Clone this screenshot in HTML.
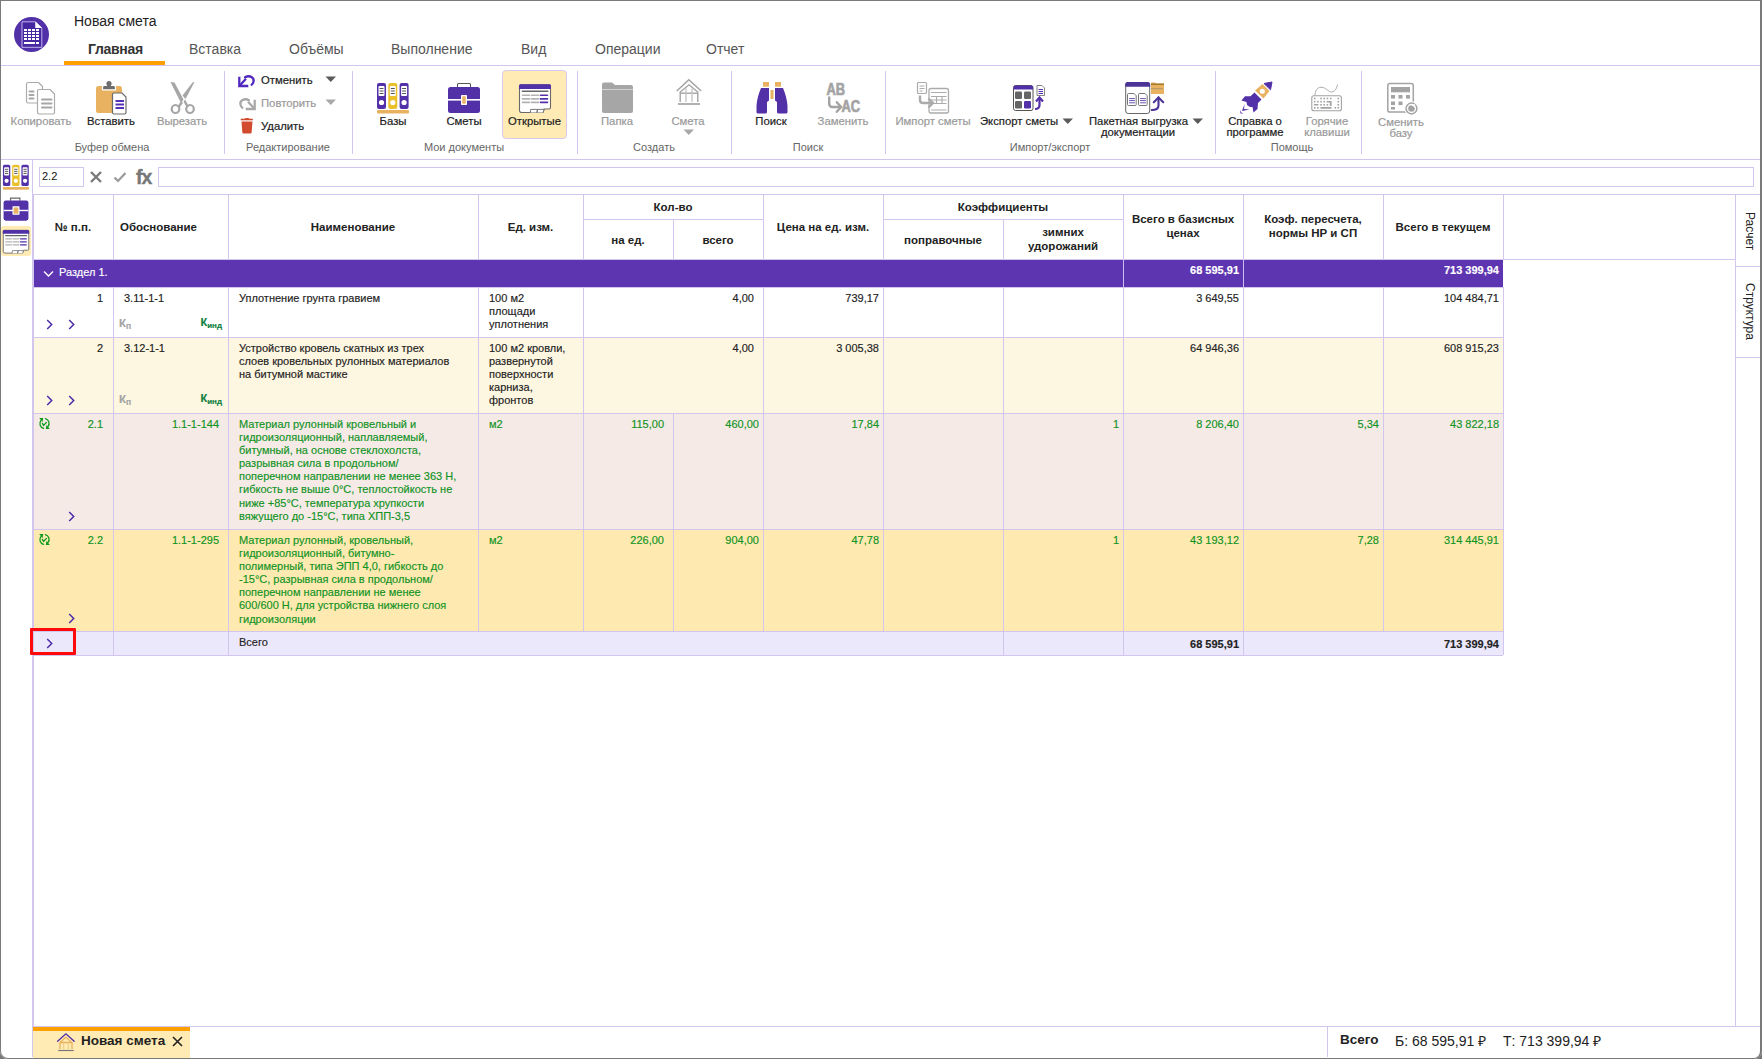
<!DOCTYPE html>
<html><head><meta charset="utf-8">
<style>
*{box-sizing:border-box;margin:0;padding:0}
html,body{width:1762px;height:1059px;overflow:hidden;background:#fff}
body{position:relative;font-family:"Liberation Sans",sans-serif;color:#222}
.a{position:absolute}
.ln{position:absolute;background:#d3c6ee}
.t{position:absolute;white-space:nowrap}
/* window frame */
#frame{position:absolute;left:0;top:0;width:1762px;height:1059px;border-top:1px solid #7a7a7a;border-left:1px solid #7a7a7a;border-right:2px solid #7a7a7a;border-bottom:1px solid #7a7a7a;border-radius:0 0 8px 8px;box-shadow:0 0 0 12px #777;pointer-events:none;z-index:50}
/* title */
.tab{position:absolute;top:41px;font-size:14px;color:#555;white-space:nowrap}
/* ribbon */
.rl{position:absolute;font-size:11.3px;white-space:nowrap;text-align:center;line-height:11px;-webkit-text-stroke:0.2px currentColor}
.dis{color:#9a9a9a}
.en{color:#222}
.grp{position:absolute;top:141px;font-size:11px;color:#666;white-space:nowrap;text-align:center}
.sep{position:absolute;top:71px;height:83px;width:1px;background:#d3c6ee}
/* table */
.c{position:absolute;font-size:11px;line-height:13.1px;white-space:nowrap;-webkit-text-stroke:0.15px currentColor}
.h{position:absolute;font-size:11.5px;font-weight:bold;color:#222;text-align:center;line-height:13px;white-space:nowrap}
.g{color:#1e9a2e}
.r{text-align:right}
</style></head><body>
<div id="frame"></div>

<!-- ===== TITLE AREA ===== -->
<svg class="a" style="left:14px;top:17px" width="36" height="36" viewBox="0 0 36 36">
  <circle cx="17.5" cy="17.5" r="17.5" fill="#5231a8"/>
  <path d="M8 4.8h13.5l6.3 6.3v19.2h-19.8z" fill="#4527a0" stroke="#c2b3ee" stroke-width="1"/>
  <path d="M21.5 4.8v6.3h6.3" fill="#fff" stroke="none"/>
  <path d="M21.5 4.8l6.3 6.3h-6.3z" fill="#fff"/>
  <g fill="#fff"><rect x="10" y="12" width="3" height="2"/><rect x="14" y="12" width="3" height="2"/><rect x="18" y="12" width="3" height="2"/><rect x="22" y="12" width="3" height="2"/><rect x="10" y="15" width="3" height="2"/><rect x="14" y="15" width="3" height="2"/><rect x="18" y="15" width="3" height="2"/><rect x="22" y="15" width="3" height="2"/><rect x="10" y="18" width="3" height="2"/><rect x="14" y="18" width="3" height="2"/><rect x="18" y="18" width="3" height="2"/><rect x="22" y="18" width="3" height="2"/><rect x="10" y="21" width="3" height="2"/><rect x="14" y="21" width="3" height="2"/><rect x="18" y="21" width="3" height="2"/><rect x="22" y="21" width="3" height="2"/><rect x="10" y="25" width="11" height="2"/><rect x="22" y="25" width="3" height="2"/></g>
</svg>
<div class="t" style="left:74px;top:13px;font-size:14px;color:#222">Новая смета</div>
<div class="tab" style="left:88px;font-weight:bold;color:#333;letter-spacing:-0.3px">Главная</div>
<div class="tab" style="left:189px">Вставка</div>
<div class="tab" style="left:289px">Объёмы</div>
<div class="tab" style="left:391px">Выполнение</div>
<div class="tab" style="left:521px">Вид</div>
<div class="tab" style="left:595px">Операции</div>
<div class="tab" style="left:706px">Отчет</div>
<div class="a" style="left:64px;top:61px;width:101px;height:4px;background:#ff9f00"></div>
<div class="ln" style="left:1px;top:65px;width:1759px;height:1px"></div>

<!-- RIBBON placeholder -->
<!-- ===== RIBBON ===== -->
<!-- Copy -->
<svg class="a" style="left:24px;top:80px" width="36" height="36" viewBox="0 0 36 36">
  <g fill="#fff" stroke="#ababab" stroke-width="1.2" stroke-linejoin="round">
    <path d="M4 2.5h10.5l4 4v16.5h-14.5a1.5 1.5 0 0 1-1.5-1.5v-17.5a1.5 1.5 0 0 1 1.5-1.5z"/>
    <path d="M15 9.5h11l4.5 4.5v18.5a1.5 1.5 0 0 1-1.5 1.5h-14a1.5 1.5 0 0 1-1.5-1.5v-21.5a1.5 1.5 0 0 1 1.5-1.5z"/>
  </g>
  <g stroke="#a6a6a6" stroke-width="2" stroke-linecap="round">
    <path d="M5.5 11.5h4M5.5 15h4M5.5 18.5h4"/>
    <path d="M18 19.5h9.5M18 23.5h9.5M18 27.5h9.5"/>
  </g>
</svg>
<div class="rl dis" style="left:10px;top:116px;width:62px">Копировать</div>
<!-- Paste -->
<svg class="a" style="left:94px;top:80px" width="36" height="36" viewBox="0 0 36 36">
  <rect x="2" y="6" width="26" height="27" rx="2.5" fill="#e8b261"/>
  <path d="M8.5 9.8v-2.3a2 2 0 0 1 2-2h2a2.6 2.6 0 0 1 5 0h2a2 2 0 0 1 2 2v2.3z" fill="#6d6d6d" stroke="#fff" stroke-width="1.2"/><circle cx="15" cy="3.6" r="2.6" fill="#6d6d6d"/>
  <path d="M20 13h8l4 4v15.5a1.5 1.5 0 0 1-1.5 1.5h-10.5a1.5 1.5 0 0 1-1.5-1.5v-18a1.5 1.5 0 0 1 1.5-1.5z" fill="#fff" stroke="#6a6a6a" stroke-width="1.2"/>
  <g stroke="#5530b5" stroke-width="2"><path d="M21.5 21h8.5M21.5 24.5h8.5M21.5 28h8.5"/></g>
</svg>
<div class="rl en" style="left:86px;top:116px;width:50px">Вставить</div>
<!-- Cut -->
<svg class="a" style="left:166px;top:80px" width="36" height="36" viewBox="0 0 36 36">
  <g fill="#a6a6a6">
    <path d="M4.5 2l4 0.5 9 17 -2.5 3.5z"/>
    <path d="M28.5 2L19.5 19l-3-3.5 10-13z"/>
    <path d="M15 21l-3.5 5.5 2 1.2 3.5-5z"/>
    <path d="M19 19.5l4 7 -2 1.2 -3.5-6z"/>
  </g>
  <g fill="none" stroke="#a6a6a6" stroke-width="2.2">
    <ellipse cx="9.5" cy="29" rx="3.8" ry="4"/>
    <ellipse cx="24" cy="29" rx="3.8" ry="4"/>
  </g>
</svg>
<div class="rl dis" style="left:156px;top:116px;width:52px">Вырезать</div>
<div class="grp" style="left:60px;top:141px;width:104px">Буфер обмена</div>
<div class="sep" style="left:224px"></div>

<!-- Undo / Redo / Delete -->
<svg class="a" style="left:238px;top:73px" width="18" height="15" viewBox="0 0 18 15">
  <path d="M7 4.2c5-2.5 9.5 0.5 8.5 4.5c-0.3 1.2-1 2.4-1.8 3" fill="none" stroke="#5128c0" stroke-width="2.3" stroke-linecap="round"/>
  <path d="M1.3 3.8v9.2h9" fill="none" stroke="#5128c0" stroke-width="2.3" stroke-linejoin="miter"/>
  <path d="M2 12.2L8 5.8" stroke="#5128c0" stroke-width="2.3"/>
</svg>
<div class="rl en" style="left:261px;top:75px">Отменить</div>
<svg class="a" style="left:325px;top:76px" width="12" height="7"><path d="M0.5 0.5h10.5L5.75 6z" fill="#5a5a5a"/></svg>
<svg class="a" style="left:238px;top:96px" width="18" height="15" viewBox="0 0 18 15">
  <path d="M11 4.2c-5-2.5 -9.5 0.5 -8.5 4.5c0.3 1.2 1 2.4 1.8 3" fill="none" stroke="#a8a8a8" stroke-width="2.3" stroke-linecap="round"/>
  <path d="M16.7 3.8v9.2h-9" fill="none" stroke="#a8a8a8" stroke-width="2.3"/>
  <path d="M16 12.2L10 5.8" stroke="#a8a8a8" stroke-width="2.3"/>
</svg>
<div class="rl dis" style="left:261px;top:98px">Повторить</div>
<svg class="a" style="left:325px;top:99px" width="12" height="7"><path d="M0.5 0.5h10.5L5.75 6z" fill="#a8a8a8"/></svg>
<svg class="a" style="left:240px;top:117px" width="14" height="17" viewBox="0 0 14 17">
  <path d="M0.8 2.5h12" stroke="#d24b2e" stroke-width="1.6"/>
  <path d="M4.5 2c0-1.5 5-1.5 5 0" fill="#d24b2e"/>
  <path d="M1.5 4.5h11l-0.8 10.5c-0.1 1-0.8 1.5-1.7 1.5h-6c-0.9 0-1.6-0.5-1.7-1.5z" fill="#d24b2e"/>
</svg>
<div class="rl en" style="left:261px;top:121px">Удалить</div>
<div class="grp" style="left:230px;top:141px;width:116px">Редактирование</div>
<div class="sep" style="left:352px"></div>

<!-- Bases -->
<svg class="a" style="left:376px;top:82px" width="34" height="33" viewBox="0 0 34 33">
  <g>
    <rect x="1" y="1" width="9" height="26" rx="2" fill="#5230a8"/>
    <rect x="12.3" y="1" width="9" height="26" rx="2" fill="#ebc12b"/>
    <rect x="23.6" y="1" width="9" height="26" rx="2" fill="#5230a8"/>
  </g>
  <g fill="#fff"><rect x="2.5" y="4" width="6" height="10" rx="1"/><rect x="13.8" y="4" width="6" height="10" rx="1"/><rect x="25.1" y="4" width="6" height="10" rx="1"/>
  <circle cx="5.5" cy="20.5" r="2.6"/><circle cx="16.8" cy="20.5" r="2.6"/><circle cx="28.1" cy="20.5" r="2.6"/></g>
  <g stroke="#555" stroke-width="1"><path d="M3.5 6.5h4M3.5 9h4M3.5 11.5h4M14.8 6.5h4M14.8 9h4M14.8 11.5h4M26.1 6.5h4M26.1 9h4M26.1 11.5h4"/></g>
  <rect x="1" y="28" width="32" height="3.5" rx="1" fill="#e8b261"/>
</svg>
<div class="rl en" style="left:378px;top:116px;width:30px">Базы</div>
<!-- Smety briefcase -->
<svg class="a" style="left:446px;top:80px" width="36" height="36" viewBox="0 0 36 36">
  <path d="M11.5 7.5v-3a1 1 0 0 1 1-1h11a1 1 0 0 1 1 1v3" fill="none" stroke="#555" stroke-width="1.1"/>
  <rect x="2" y="7" width="32" height="26" rx="2.5" fill="#5230a8"/>
  <rect x="2" y="19" width="32" height="1.6" fill="#fff"/>
  <rect x="15" y="15" width="6" height="10" rx="0.8" fill="#fff"/>
  <rect x="16.3" y="16.3" width="3.4" height="7.4" fill="#e8b261"/>
</svg>
<div class="rl en" style="left:446px;top:116px;width:36px">Сметы</div>
<!-- Open (selected) -->
<div class="a" style="left:502px;top:70px;width:65px;height:69px;background:#ffebb3;border:1px solid #d8c8ee;border-radius:4px"></div>
<svg class="a" style="left:518px;top:82px" width="34" height="34" viewBox="0 0 34 34">
  <path d="M2.6 2.8h28.8a1.1 1.1 0 0 1 1.1 1.1v21.6a1.5 1.5 0 0 1-1.5 1.5h-4.8l-1.2 3.5h-21.3a2 2 0 0 1-2.2-2v-24.6a1.1 1.1 0 0 1 1.1-1.1z" fill="#fff" stroke="#6a6a6a" stroke-width="1.1"/>
  <path d="M2.6 2.3h28.8a1.6 1.6 0 0 1 1.6 1.6v3.2h-32v-3.2a1.6 1.6 0 0 1 1.6-1.6z" fill="#5230a8"/>
  <path d="M12.3 30.6l0.4-3.2h6.8l-0.6 3.2M18.9 30.6l0.8-3.2h6.4l-1 3.2" fill="#fff" stroke="#6a6a6a" stroke-width="0.9"/>
  <path d="M4.3 9.2h25.5" stroke="#666" stroke-width="1.5" stroke-linecap="round"/>
  <g stroke="#b3b3b3" stroke-width="1.6" stroke-linecap="round"><path d="M4.5 13.2h7M13.5 13.2h7M4.5 16.9h7M13.5 16.9h7M4.5 20.4h7M13.5 20.4h7"/></g>
  <g stroke="#5230a8" stroke-width="1.6" stroke-linecap="round"><path d="M22.5 13.2h7M22.5 16.9h7M22.5 20.4h7"/></g>
</svg>
<div class="rl en" style="left:503px;top:116px;width:63px">Открытые</div>
<div class="grp" style="left:380px;top:141px;width:168px">Мои документы</div>
<div class="sep" style="left:577px"></div>

<!-- Folder -->
<svg class="a" style="left:600px;top:80px" width="36" height="36" viewBox="0 0 36 36">
  <path d="M2 4.5a2 2 0 0 1 2-2h8l3 2.5h16a2 2 0 0 1 2 2v2.5h-31z" fill="#a6a6a6"/>
  <path d="M2 10h31v21a2 2 0 0 1-2 2h-27a2 2 0 0 1-2-2z" fill="#a6a6a6"/>
</svg>
<div class="rl dis" style="left:597px;top:116px;width:40px">Папка</div>
<!-- House -->
<svg class="a" style="left:670px;top:74px" width="40" height="40" viewBox="0 0 40 40">
  <path d="M6.8 17L18.8 5.8 31.2 17" fill="none" stroke="#a3a3a3" stroke-width="1.5"/>
  <path d="M10.2 28v-10L19 10.8 27.8 18v10" fill="none" stroke="#a3a3a3" stroke-width="1.4"/>
  <path d="M10.2 19.2h17.6" stroke="#a3a3a3" stroke-width="1.4"/>
  <path d="M16 14.5v13.5M22 14.5v13.5" stroke="#c4c4c4" stroke-width="1.3"/>
  <path d="M8 30h22" stroke="#a3a3a3" stroke-width="1.7"/>
</svg>
<div class="rl dis" style="left:668px;top:116px;width:40px">Смета</div>
<svg class="a" style="left:683px;top:129px" width="12" height="7"><path d="M0.5 0.5h10.5L5.75 6z" fill="#a8a8a8"/></svg>
<div class="grp" style="left:610px;top:141px;width:88px">Создать</div>
<div class="sep" style="left:731px"></div>

<!-- Binoculars -->
<svg class="a" style="left:752px;top:78px" width="40" height="40" viewBox="0 0 40 40">
  <rect x="11" y="4" width="6" height="4.7" fill="#e8b261"/><rect x="23" y="4" width="6" height="4.7" fill="#e8b261"/>
  <rect x="18.5" y="12" width="3" height="9" fill="#e8b261"/>
  <path d="M10 10h7v12.5l-2 1.5v10a1.5 1.5 0 0 1-1.5 1.5h-7.5a1.5 1.5 0 0 1-1.5-1.5v-6c0.3-6 2-12 4.5-18z" fill="#5230a8"/>
  <path d="M30 10h-7v12.5l2 1.5v10a1.5 1.5 0 0 0 1.5 1.5h7.5a1.5 1.5 0 0 0 1.5-1.5v-6c-0.3-6-2-12-4.5-18z" fill="#5230a8"/>
</svg>
<div class="rl en" style="left:751px;top:116px;width:40px">Поиск</div>
<!-- Replace -->
<svg class="a" style="left:826px;top:80px" width="36" height="36" viewBox="0 0 36 36">
  <text transform="translate(0.5,14.8) scale(0.78,1)" font-family="Liberation Sans" font-weight="bold" font-size="16.5" fill="#a3a3a3" stroke="#a3a3a3" stroke-width="0.7">AB</text>
  <text transform="translate(15.5,32) scale(0.78,1)" font-family="Liberation Sans" font-weight="bold" font-size="16.5" fill="#a3a3a3" stroke="#a3a3a3" stroke-width="0.7">AC</text>
  <path d="M3.2 17.5v6.5a3 3 0 0 0 3 3h8" fill="none" stroke="#a3a3a3" stroke-width="2.4" stroke-linecap="round"/>
  <path d="M10.8 22.2l4.3 4.8-4.3 4.8" fill="none" stroke="#a3a3a3" stroke-width="2.4" stroke-linecap="round"/>
</svg>
<div class="rl dis" style="left:812px;top:116px;width:62px">Заменить</div>
<div class="grp" style="left:768px;top:141px;width:80px">Поиск</div>
<div class="sep" style="left:885px"></div>
<!-- Import -->
<svg class="a" style="left:915px;top:80px" width="36" height="36" viewBox="0 0 36 36">
  <rect x="2.5" y="2.5" width="9" height="11" rx="1" fill="#fff" stroke="#ababab" stroke-width="1.2"/>
  <g stroke="#ababab" stroke-width="1"><path d="M4.5 6h5M4.5 8.5h5M4.5 11h3"/></g>
  <rect x="14" y="8.5" width="19.5" height="24.5" rx="2" fill="#fff" stroke="#ababab" stroke-width="1.3"/>
  <g stroke="#ababab" stroke-width="1.1"><path d="M16 12.5h15.5M16 30h15.5M16 16.5h15.5M16 20h15.5M16 23.5h15.5M21.5 16.5v7M27 16.5v7"/></g>
  <path d="M5 15.5v4.5c0 2 1 3 3 3h9" fill="none" stroke="#ababab" stroke-width="2.4"/>
  <path d="M13.5 18.5l4.5 4.5-4.5 4.5" fill="none" stroke="#ababab" stroke-width="2.4"/>
</svg>
<div class="rl dis" style="left:893px;top:116px;width:80px">Импорт сметы</div>
<!-- Export -->
<svg class="a" style="left:1011px;top:80px" width="36" height="36" viewBox="0 0 36 36">
  <rect x="2.5" y="5.5" width="19.5" height="25" rx="2" fill="#fff" stroke="#555" stroke-width="1"/>
  <path d="M2.5 7.5a2 2 0 0 1 2-2h15.5a2 2 0 0 1 2 2v2h-19.5z" fill="#5230a8"/>
  <rect x="4" y="11.5" width="7" height="7.5" rx="1.2" fill="#666"/><rect x="13" y="11.5" width="7" height="7.5" rx="1.2" fill="#666"/>
  <rect x="4" y="21" width="7" height="7.5" rx="1.2" fill="#666"/><rect x="13" y="21" width="7" height="7.5" rx="1.2" fill="#5230a8"/>
  <path d="M26 5.5h5l2.5 2.5v7.5h-7.5z" fill="#fff" stroke="#777" stroke-width="0.9"/>
  <g stroke="#5230a8" stroke-width="1"><path d="M27.5 9.5h4.5M27.5 11.5h4.5M27.5 13.5h4.5"/></g>
  <path d="M24 29c3 0 4.5-1.5 4.5-4v-6" fill="none" stroke="#5230a8" stroke-width="2.2"/>
  <path d="M25 21.5l3.5-4 3.5 4" fill="none" stroke="#5230a8" stroke-width="2.2"/>
</svg>
<div class="rl en" style="left:980px;top:116px;width:82px;text-align:left">Экспорт сметы</div>
<svg class="a" style="left:1062px;top:118px" width="12" height="7"><path d="M0.5 0.5h10.5L5.75 6z" fill="#5a5a5a"/></svg>
<!-- Batch -->
<svg class="a" style="left:1120px;top:76px" width="48" height="42" viewBox="0 0 48 42">
  <rect x="5.7" y="6.5" width="24" height="31" rx="2.5" fill="#fff" stroke="#666" stroke-width="1"/>
  <path d="M5.2 8.5a2.5 2.5 0 0 1 2.5-2.5h20a2.5 2.5 0 0 1 2.5 2.5v2.3h-25z" fill="#4b3495"/>
  <path d="M8.5 17.5h5.5l2.2 2.2v8.8a1 1 0 0 1-1 1h-6.7a1 1 0 0 1-1-1v-10a1 1 0 0 1 1-1z" fill="#fff" stroke="#666" stroke-width="0.9"/>
  <path d="M19.5 17.5h5.5l2.2 2.2v8.8a1 1 0 0 1-1 1h-6.7a1 1 0 0 1-1-1v-10a1 1 0 0 1 1-1z" fill="#fff" stroke="#666" stroke-width="0.9"/>
  <g stroke="#5a3fa8" stroke-width="0.9" stroke-linecap="round"><path d="M9.5 22.6h5M9.5 24.6h5M9.5 26.8h5M20.5 22.6h5M20.5 24.6h5M20.5 26.8h5"/></g>
  <path d="M31 6.5h4l1.2 1h7.8v10.5h-13z" fill="#e8b261"/>
  <path d="M31 7.5h13v1.5h-13z" fill="#a27a30"/>
  <path d="M31.5 12.7h12" stroke="#7a7a7a" stroke-width="1" stroke-dasharray="1 1"/>
  <path d="M31.8 34c3 0 6.7-0.3 6.7-4.5v-8" fill="none" stroke="#4b3495" stroke-width="2.1" stroke-linecap="round"/>
  <path d="M33.8 26.2l4.7-4.7 4.7 4.7" fill="none" stroke="#4b3495" stroke-width="2.1" stroke-linecap="round"/>
</svg>
<div class="rl en" style="left:1089px;top:116px;width:104px;text-align:left">Пакетная выгрузка</div>
<div class="rl en" style="left:1101px;top:127px;width:80px;text-align:left">документации</div>
<svg class="a" style="left:1192px;top:118px" width="12" height="7"><path d="M0.5 0.5h10.5L5.75 6z" fill="#5a5a5a"/></svg>
<div class="grp" style="left:990px;top:141px;width:120px">Импорт/экспорт</div>
<div class="sep" style="left:1215px"></div>

<!-- Rocket -->
<svg class="a" style="left:1236px;top:78px" width="40" height="40" viewBox="0 0 40 40">
  <path d="M28 5.5L36 4 34.5 11.8z" fill="#5230a8" stroke="#5230a8" stroke-width="1" stroke-linejoin="round"/>
  <path d="M19 12.5L26.5 6 33.5 13 27.5 20.5z" fill="#e8b261"/>
  <circle cx="26.3" cy="13.3" r="2.5" fill="#fff"/>
  <path d="M18.5 14.5L25.5 21.5 22 25 21.5 31 17.5 34.5 16.5 29 14 29 11 27 10.5 24 5.5 22.5 9 18.3 14.5 18.3z" fill="#5230a8"/>
  <path d="M8.5 26L6 33 13.5 31.5 8 31z" fill="#5230a8"/>
  <path d="M4 32L4.5 35.5 7.5 35.5 5.3 34.5z" fill="#5230a8"/>
</svg>
<div class="rl en" style="left:1221px;top:116px;width:68px">Справка о</div>
<div class="rl en" style="left:1221px;top:127px;width:68px">программе</div>
<!-- Keyboard -->
<svg class="a" style="left:1305px;top:78px" width="45" height="40" viewBox="0 0 45 40">
  <path d="M10 17.5C10 13 12 9.5 16 9.2C19.5 9 22 12 24.5 13.5C27.5 15 31.5 13 32.5 6.5" fill="none" stroke="#a3a3a3" stroke-width="0.9"/>
  <rect x="6.8" y="17.8" width="29.6" height="15" rx="2" fill="#fff" stroke="#a3a3a3" stroke-width="1.1"/>
  <g fill="#a3a3a3"><rect x="8.9" y="19.7" width="1.6" height="1.6"/><rect x="15.2" y="19.7" width="1.6" height="1.6"/><rect x="18.4" y="19.7" width="1.6" height="1.6"/><rect x="21.6" y="19.7" width="1.6" height="1.6"/><rect x="24.9" y="19.7" width="1.6" height="1.6"/><rect x="32.5" y="19.7" width="1.6" height="1.6"/><rect x="8.9" y="22.9" width="1.6" height="1.6"/><rect x="12.1" y="22.9" width="1.6" height="1.6"/><rect x="15.2" y="22.9" width="1.6" height="1.6"/><rect x="18.4" y="22.9" width="1.6" height="1.6"/><rect x="32.5" y="22.9" width="1.6" height="1.6"/><rect x="15.2" y="26.0" width="1.6" height="1.6"/><rect x="18.4" y="26.0" width="1.6" height="1.6"/><rect x="21.6" y="26.0" width="1.6" height="1.6"/><rect x="32.5" y="26.0" width="1.6" height="1.6"/><rect x="8.9" y="29.0" width="1.6" height="1.6"/><rect x="12.1" y="29.0" width="1.6" height="1.6"/><rect x="29.5" y="29.0" width="1.6" height="1.6"/><rect x="32.5" y="29.0" width="1.6" height="1.6"/>
  <path d="M21.6 22.9h5v5h-1.8v-3.3h-3.2z"/>
  <rect x="8.8" y="26" width="4.8" height="1.6" rx="0.8"/>
  <rect x="15.3" y="29" width="11.4" height="1.8" rx="0.9"/></g>
</svg>
<div class="rl dis" style="left:1298px;top:116px;width:58px">Горячие</div>
<div class="rl dis" style="left:1298px;top:127px;width:58px">клавиши</div>
<div class="grp" style="left:1250px;top:141px;width:84px">Помощь</div>
<div class="sep" style="left:1361px"></div>
<!-- Calculator -->
<svg class="a" style="left:1384px;top:80px" width="38" height="38" viewBox="0 0 38 38">
  <rect x="3.8" y="3.6" width="25.5" height="28.5" rx="2.2" fill="#fff" stroke="#a3a3a3" stroke-width="1.5"/>
  <rect x="7" y="7" width="19" height="5.3" fill="#a3a3a3"/>
  <g fill="#a3a3a3"><rect x="7" y="15" width="4" height="3.6"/><rect x="14.5" y="15" width="4" height="3.6"/><rect x="22" y="15" width="4" height="3.6"/>
  <rect x="7" y="21.5" width="4" height="3.6"/><rect x="14.5" y="21.5" width="4" height="3.6"/><rect x="7" y="27" width="4" height="2.5"/></g>
  <circle cx="27.5" cy="28.5" r="7.2" fill="#fff"/>
  <circle cx="27.5" cy="28.5" r="5.4" fill="none" stroke="#a3a3a3" stroke-width="1.5"/>
  <circle cx="27.5" cy="28.5" r="3.3" fill="#a3a3a3"/>
  <path d="M27.5 25.2l3.6-1.2v3.8z" fill="#fff"/>
</svg>
<div class="rl dis" style="left:1372px;top:117px;width:58px">Сменить</div>
<div class="rl dis" style="left:1372px;top:128px;width:58px">базу</div>


<div class="ln" style="left:1px;top:159px;width:1759px;height:1px"></div>

<!-- SIDEBAR -->
<div class="ln" style="left:32px;top:160px;width:1px;height:897px"></div>

<!-- TABLE placeholder -->
<!-- SIDEBAR ICONS -->
<svg class="a" style="left:2px;top:164px" width="28" height="27" viewBox="0 0 34 33">
  <rect x="1" y="1" width="9" height="26" rx="2" fill="#5230a8"/>
  <rect x="12.3" y="1" width="9" height="26" rx="2" fill="#ebc12b"/>
  <rect x="23.6" y="1" width="9" height="26" rx="2" fill="#5230a8"/>
  <g fill="#fff"><rect x="2.5" y="4" width="6" height="10" rx="1"/><rect x="13.8" y="4" width="6" height="10" rx="1"/><rect x="25.1" y="4" width="6" height="10" rx="1"/>
  <circle cx="5.5" cy="20.5" r="2.6"/><circle cx="16.8" cy="20.5" r="2.6"/><circle cx="28.1" cy="20.5" r="2.6"/></g>
  <g stroke="#555" stroke-width="1.2"><path d="M3.5 6.5h4M3.5 9h4M3.5 11.5h4M14.8 6.5h4M14.8 9h4M14.8 11.5h4M26.1 6.5h4M26.1 9h4M26.1 11.5h4"/></g>
  <rect x="1" y="28" width="32" height="3.5" rx="1" fill="#e8b261"/>
</svg>
<svg class="a" style="left:2px;top:195px" width="28" height="28" viewBox="0 0 36 36">
  <path d="M11 7.5v-3.5h12v3.5" fill="none" stroke="#666" stroke-width="1.5"/>
  <rect x="2" y="7" width="32" height="26" rx="3" fill="#5230a8"/>
  <rect x="2" y="19" width="32" height="1.8" fill="#fff"/>
  <rect x="13.5" y="14.5" width="9" height="11" rx="0.8" fill="#fff"/>
  <rect x="15" y="16" width="6" height="8" fill="#e8b261"/>
</svg>
<div class="a" style="left:1px;top:226px;width:30px;height:30px;background:#ffebb3;border-radius:3px"></div>
<svg class="a" style="left:2px;top:228px" width="28" height="28" viewBox="0 0 34 34">
  <path d="M2.6 2.8h28.8a1.1 1.1 0 0 1 1.1 1.1v21.6a1.5 1.5 0 0 1-1.5 1.5h-4.8l-1.2 3.5h-21.3a2 2 0 0 1-2.2-2v-24.6a1.1 1.1 0 0 1 1.1-1.1z" fill="#fff" stroke="#6a6a6a" stroke-width="1.1"/>
  <path d="M2.6 2.3h28.8a1.6 1.6 0 0 1 1.6 1.6v3.2h-32v-3.2a1.6 1.6 0 0 1 1.6-1.6z" fill="#5230a8"/>
  <path d="M12.3 30.6l0.4-3.2h6.8l-0.6 3.2M18.9 30.6l0.8-3.2h6.4l-1 3.2" fill="#fff" stroke="#6a6a6a" stroke-width="0.9"/>
  <path d="M4.3 9.2h25.5" stroke="#666" stroke-width="1.5" stroke-linecap="round"/>
  <g stroke="#b3b3b3" stroke-width="1.6" stroke-linecap="round"><path d="M4.5 13.2h7M13.5 13.2h7M4.5 16.9h7M13.5 16.9h7M4.5 20.4h7M13.5 20.4h7"/></g>
  <g stroke="#5230a8" stroke-width="1.6" stroke-linecap="round"><path d="M22.5 13.2h7M22.5 16.9h7M22.5 20.4h7"/></g>
</svg>

<!-- FORMULA BAR -->
<div class="a" style="left:39px;top:167px;width:45px;height:20px;border:1px solid #d3c6ee;background:#fff"></div>
<div class="t" style="left:42px;top:170px;font-size:11px;color:#111">2.2</div>
<svg class="a" style="left:89px;top:170px" width="14" height="14" viewBox="0 0 14 14"><path d="M2 2l10 10M12 2L2 12" stroke="#7a7a7a" stroke-width="2.4"/></svg>
<svg class="a" style="left:113px;top:171px" width="14" height="12" viewBox="0 0 14 12"><path d="M1.5 6.5l3.5 3.5 7.5-8" fill="none" stroke="#9a9a9a" stroke-width="2.2"/></svg>
<div class="t" style="left:136px;top:166px;font-size:19.5px;font-weight:bold;color:#777;letter-spacing:-0.9px;-webkit-text-stroke:0.4px #777">fx</div>
<div class="a" style="left:158px;top:167px;width:1596px;height:20px;border:1px solid #d3c6ee;background:#fff"></div>

<!-- RIGHT VERTICAL TABS -->
<div class="ln" style="left:1736px;top:266px;width:24px;height:1px"></div>
<div class="ln" style="left:1736px;top:357px;width:24px;height:1px"></div>
<div class="t" style="left:1743px;top:212px;font-size:12px;color:#222;writing-mode:vertical-rl">Расчет</div>
<div class="t" style="left:1743px;top:283px;font-size:12px;color:#222;writing-mode:vertical-rl">Структура</div>

<!-- BOTTOM TAB -->
<div class="a" style="left:33px;top:1027px;width:157px;height:4px;background:#ff9f00"></div>
<div class="a" style="left:33px;top:1031px;width:157px;height:27px;background:#ffebb3"></div>
<svg class="a" style="left:50px;top:1028px" width="30" height="28" viewBox="0 0 30 28">
  <path d="M10 21v-6.5l5.8-5.2 6.2 5.2v6.5M10 14.5h12" fill="none" stroke="#e8b261" stroke-width="1.3"/>
  <path d="M13.7 15v6M18.2 15v6" stroke="#efcb88" stroke-width="1.1"/>
  <path d="M7.6 13.2L15.9 5.8 24.2 13.2" fill="none" stroke="#4b2aa8" stroke-width="1.3" stroke-linecap="round"/>
  <path d="M8.2 22.5h15.6" stroke="#777" stroke-width="1.2"/>
</svg>
<div class="t" style="left:81px;top:1033px;font-size:13.5px;font-weight:bold;color:#222">Новая смета</div>
<svg class="a" style="left:172px;top:1036px" width="11" height="11" viewBox="0 0 11 11"><path d="M1 1l9 9M10 1L1 10" stroke="#222" stroke-width="1.6"/></svg>

<!-- STATUS -->
<div class="ln" style="left:1327px;top:1027px;width:1px;height:30px"></div>
<div class="t" style="left:1340px;top:1032px;font-size:13.5px;font-weight:bold;color:#222">Всего</div>
<div class="t" style="left:1395px;top:1031px;font-size:14px;color:#222">Б: 68 595,91 ₽</div>
<div class="t" style="left:1503px;top:1031px;font-size:14px;color:#222">Т: 713 399,94 ₽</div>

<!-- TABLE -->
<div id="tbl">
<div class="a" style="left:33px;top:194px;width:1727px;height:1px;background:#d3c6ee"></div>
<div class="a" style="left:583px;top:219px;width:180px;height:1px;background:#d3c6ee"></div>
<div class="a" style="left:883px;top:219px;width:240px;height:1px;background:#d3c6ee"></div>
<div class="a" style="left:33px;top:194px;width:1px;height:65px;background:#d3c6ee"></div>
<div class="a" style="left:113px;top:194px;width:1px;height:65px;background:#d3c6ee"></div>
<div class="a" style="left:228px;top:194px;width:1px;height:65px;background:#d3c6ee"></div>
<div class="a" style="left:478px;top:194px;width:1px;height:65px;background:#d3c6ee"></div>
<div class="a" style="left:583px;top:194px;width:1px;height:65px;background:#d3c6ee"></div>
<div class="a" style="left:673px;top:219px;width:1px;height:40px;background:#d3c6ee"></div>
<div class="a" style="left:763px;top:194px;width:1px;height:65px;background:#d3c6ee"></div>
<div class="a" style="left:883px;top:194px;width:1px;height:65px;background:#d3c6ee"></div>
<div class="a" style="left:1003px;top:219px;width:1px;height:40px;background:#d3c6ee"></div>
<div class="a" style="left:1123px;top:194px;width:1px;height:65px;background:#d3c6ee"></div>
<div class="a" style="left:1243px;top:194px;width:1px;height:65px;background:#d3c6ee"></div>
<div class="a" style="left:1383px;top:194px;width:1px;height:65px;background:#d3c6ee"></div>
<div class="a" style="left:1503px;top:194px;width:1px;height:65px;background:#d3c6ee"></div>
<div class="a" style="left:33px;top:259px;width:1702px;height:1px;background:#d3c6ee"></div>
<div class="h" style="left:33px;top:221px;width:80px;">№ п.п.</div>
<div class="h" style="left:120px;top:221px;">Обоснование</div>
<div class="h" style="left:228px;top:221px;width:250px;">Наименование</div>
<div class="h" style="left:478px;top:221px;width:105px;">Ед. изм.</div>
<div class="h" style="left:583px;top:201px;width:180px;">Кол-во</div>
<div class="h" style="left:583px;top:234px;width:90px;">на ед.</div>
<div class="h" style="left:673px;top:234px;width:90px;">всего</div>
<div class="h" style="left:763px;top:221px;width:120px;">Цена на ед. изм.</div>
<div class="h" style="left:883px;top:201px;width:240px;">Коэффициенты</div>
<div class="h" style="left:883px;top:234px;width:120px;">поправочные</div>
<div class="h" style="left:1003px;top:226px;width:120px;line-height:13.5px">зимних<br>удорожаний</div>
<div class="h" style="left:1123px;top:213px;width:120px;line-height:13.5px">Всего в базисных<br>ценах</div>
<div class="h" style="left:1243px;top:213px;width:140px;line-height:13.5px">Коэф. пересчета,<br>нормы НР и СП</div>
<div class="h" style="left:1383px;top:221px;width:120px;">Всего в текущем</div>
<div class="a" style="left:34px;top:260px;width:1469px;height:27px;background:#5e35b1"></div>
<div class="a" style="left:33px;top:260px;width:1px;height:27px;background:#d3c6ee"></div>
<div class="a" style="left:1123px;top:260px;width:1px;height:27px;background:#cbbdf0"></div>
<div class="a" style="left:1243px;top:260px;width:1px;height:27px;background:#cbbdf0"></div>
<svg class="a" style="left:43px;top:270px" width="11" height="8" viewBox="0 0 11 8"><path d="M1 1.5l4.5 4.5 4.5-4.5" fill="none" stroke="#fff" stroke-width="1.3"/></svg>
<div class="c" style="left:59px;top:266px;color:#fff;">Раздел 1.</div>
<div class="c" style="right:523px;top:264px;color:#fff;font-weight:bold">68 595,91</div>
<div class="c" style="right:263px;top:264px;color:#fff;font-weight:bold">713 399,94</div>
<div class="a" style="left:33px;top:287px;width:1470px;height:50px;background:#ffffff"></div>
<div class="a" style="left:33px;top:287px;width:1470px;height:1px;background:#d3c6ee"></div>
<div class="a" style="left:33px;top:287px;width:1px;height:50px;background:#d3c6ee"></div>
<div class="a" style="left:113px;top:287px;width:1px;height:50px;background:#d3c6ee"></div>
<div class="a" style="left:228px;top:287px;width:1px;height:50px;background:#d3c6ee"></div>
<div class="a" style="left:478px;top:287px;width:1px;height:50px;background:#d3c6ee"></div>
<div class="a" style="left:583px;top:287px;width:1px;height:50px;background:#d3c6ee"></div>
<div class="a" style="left:763px;top:287px;width:1px;height:50px;background:#d3c6ee"></div>
<div class="a" style="left:883px;top:287px;width:1px;height:50px;background:#d3c6ee"></div>
<div class="a" style="left:1003px;top:287px;width:1px;height:50px;background:#d3c6ee"></div>
<div class="a" style="left:1123px;top:287px;width:1px;height:50px;background:#d3c6ee"></div>
<div class="a" style="left:1243px;top:287px;width:1px;height:50px;background:#d3c6ee"></div>
<div class="a" style="left:1383px;top:287px;width:1px;height:50px;background:#d3c6ee"></div>
<div class="a" style="left:1503px;top:287px;width:1px;height:50px;background:#d3c6ee"></div>
<div class="c" style="right:1659px;top:292px;color:#222">1</div>
<div class="c" style="left:124px;top:292px;color:#222">3.11-1-1</div>
<div class="c" style="left:239px;top:292px;color:#222">Уплотнение грунта гравием</div>
<div class="c" style="left:489px;top:292px;color:#222">100 м2<br>площади<br>уплотнения</div>
<div class="c" style="right:1008px;top:292px;color:#222">4,00</div>
<div class="c" style="right:883px;top:292px;color:#222">739,17</div>
<div class="c" style="right:523px;top:292px;color:#222">3 649,55</div>
<div class="c" style="right:263px;top:292px;color:#222">104 484,71</div>
<svg class="a" style="left:46px;top:319px" width="7" height="11" viewBox="0 0 7 11"><path d="M1.2 1l4.5 4.5-4.5 4.5" fill="none" stroke="#4b2aa8" stroke-width="1.5"/></svg>
<svg class="a" style="left:68px;top:319px" width="7" height="11" viewBox="0 0 7 11"><path d="M1.2 1l4.5 4.5-4.5 4.5" fill="none" stroke="#4b2aa8" stroke-width="1.5"/></svg>
<div class="c" style="left:119px;top:317px;color:#a3a3a3;font-size:11.5px;font-weight:bold">К<span style="font-size:8.5px;position:relative;top:2px">п</span></div>
<div class="c" style="right:1540px;top:316px;color:#0e7f3e;font-weight:bold;font-size:11px">К<span style="font-size:8px;position:relative;top:2px">инд</span></div>
<div class="a" style="left:33px;top:337px;width:1470px;height:76px;background:#fdf6e1"></div>
<div class="a" style="left:33px;top:337px;width:1470px;height:1px;background:#d3c6ee"></div>
<div class="a" style="left:33px;top:337px;width:1px;height:76px;background:#d3c6ee"></div>
<div class="a" style="left:113px;top:337px;width:1px;height:76px;background:#d3c6ee"></div>
<div class="a" style="left:228px;top:337px;width:1px;height:76px;background:#d3c6ee"></div>
<div class="a" style="left:478px;top:337px;width:1px;height:76px;background:#d3c6ee"></div>
<div class="a" style="left:583px;top:337px;width:1px;height:76px;background:#d3c6ee"></div>
<div class="a" style="left:763px;top:337px;width:1px;height:76px;background:#d3c6ee"></div>
<div class="a" style="left:883px;top:337px;width:1px;height:76px;background:#d3c6ee"></div>
<div class="a" style="left:1003px;top:337px;width:1px;height:76px;background:#d3c6ee"></div>
<div class="a" style="left:1123px;top:337px;width:1px;height:76px;background:#d3c6ee"></div>
<div class="a" style="left:1243px;top:337px;width:1px;height:76px;background:#d3c6ee"></div>
<div class="a" style="left:1383px;top:337px;width:1px;height:76px;background:#d3c6ee"></div>
<div class="a" style="left:1503px;top:337px;width:1px;height:76px;background:#d3c6ee"></div>
<div class="c" style="right:1659px;top:342px;color:#222">2</div>
<div class="c" style="left:124px;top:342px;color:#222">3.12-1-1</div>
<div class="c" style="left:239px;top:342px;color:#222">Устройство кровель скатных из трех<br>слоев кровельных рулонных материалов<br>на битумной мастике</div>
<div class="c" style="left:489px;top:342px;color:#222">100 м2 кровли,<br>развернутой<br>поверхности<br>карниза,<br>фронтов</div>
<div class="c" style="right:1008px;top:342px;color:#222">4,00</div>
<div class="c" style="right:883px;top:342px;color:#222">3 005,38</div>
<div class="c" style="right:523px;top:342px;color:#222">64 946,36</div>
<div class="c" style="right:263px;top:342px;color:#222">608 915,23</div>
<svg class="a" style="left:46px;top:395px" width="7" height="11" viewBox="0 0 7 11"><path d="M1.2 1l4.5 4.5-4.5 4.5" fill="none" stroke="#4b2aa8" stroke-width="1.5"/></svg>
<svg class="a" style="left:68px;top:395px" width="7" height="11" viewBox="0 0 7 11"><path d="M1.2 1l4.5 4.5-4.5 4.5" fill="none" stroke="#4b2aa8" stroke-width="1.5"/></svg>
<div class="c" style="left:119px;top:393px;color:#a3a3a3;font-size:11.5px;font-weight:bold">К<span style="font-size:8.5px;position:relative;top:2px">п</span></div>
<div class="c" style="right:1540px;top:392px;color:#0e7f3e;font-weight:bold;font-size:11px">К<span style="font-size:8px;position:relative;top:2px">инд</span></div>
<div class="a" style="left:33px;top:413px;width:1470px;height:116px;background:#f6eae6"></div>
<div class="a" style="left:33px;top:413px;width:1470px;height:1px;background:#d3c6ee"></div>
<div class="a" style="left:33px;top:413px;width:1px;height:116px;background:#d3c6ee"></div>
<div class="a" style="left:113px;top:413px;width:1px;height:116px;background:#d3c6ee"></div>
<div class="a" style="left:228px;top:413px;width:1px;height:116px;background:#d3c6ee"></div>
<div class="a" style="left:478px;top:413px;width:1px;height:116px;background:#d3c6ee"></div>
<div class="a" style="left:583px;top:413px;width:1px;height:116px;background:#d3c6ee"></div>
<div class="a" style="left:673px;top:413px;width:1px;height:116px;background:#d3c6ee"></div>
<div class="a" style="left:763px;top:413px;width:1px;height:116px;background:#d3c6ee"></div>
<div class="a" style="left:883px;top:413px;width:1px;height:116px;background:#d3c6ee"></div>
<div class="a" style="left:1003px;top:413px;width:1px;height:116px;background:#d3c6ee"></div>
<div class="a" style="left:1123px;top:413px;width:1px;height:116px;background:#d3c6ee"></div>
<div class="a" style="left:1243px;top:413px;width:1px;height:116px;background:#d3c6ee"></div>
<div class="a" style="left:1383px;top:413px;width:1px;height:116px;background:#d3c6ee"></div>
<div class="a" style="left:1503px;top:413px;width:1px;height:116px;background:#d3c6ee"></div>
<div class="c" style="right:1659px;top:418px;color:#10931f">2.1</div>
<div class="c" style="right:1543px;top:418px;color:#10931f">1.1-1-144</div>
<div class="c" style="left:239px;top:418px;color:#10931f">Материал рулонный кровельный и<br>гидроизоляционный, наплавляемый,<br>битумный, на основе стеклохолста,<br>разрывная сила в продольном/<br>поперечном направлении не менее 363 Н,<br>гибкость не выше 0°С, теплостойкость не<br>ниже +85°С, температура хрупкости<br>вяжущего до -15°С, типа ХПП-3,5</div>
<div class="c" style="left:489px;top:418px;color:#10931f">м2</div>
<div class="c" style="right:1098px;top:418px;color:#10931f">115,00</div>
<div class="c" style="right:1003px;top:418px;color:#10931f">460,00</div>
<div class="c" style="right:883px;top:418px;color:#10931f">17,84</div>
<div class="c" style="right:643px;top:418px;color:#10931f">1</div>
<div class="c" style="right:523px;top:418px;color:#10931f">8 206,40</div>
<div class="c" style="right:383px;top:418px;color:#10931f">5,34</div>
<div class="c" style="right:263px;top:418px;color:#10931f">43 822,18</div>
<svg class="a" style="left:68px;top:511px" width="7" height="11" viewBox="0 0 7 11"><path d="M1.2 1l4.5 4.5-4.5 4.5" fill="none" stroke="#4b2aa8" stroke-width="1.5"/></svg>
<svg class="a" style="left:38px;top:417px" width="13" height="13" viewBox="0 0 13 13"><g fill="none" stroke="#0c9a1c" stroke-width="1.3" stroke-linecap="round"><path d="M5.6 11.4A5 5 0 0 1 3.2 3.2"/><path d="M7.4 1.6A5 5 0 0 1 9.8 9.8"/><path d="M4.4 6.4L5.6 8.4 8.4 5.4"/></g><path d="M1.2 1h4l-0.6 4z" fill="#0c9a1c"/><path d="M11.8 12h-4l0.6-4z" fill="#0c9a1c"/></svg>
<div class="a" style="left:33px;top:529px;width:1470px;height:102px;background:#feeab1"></div>
<div class="a" style="left:33px;top:529px;width:1470px;height:1px;background:#d3c6ee"></div>
<div class="a" style="left:33px;top:529px;width:1px;height:102px;background:#d3c6ee"></div>
<div class="a" style="left:113px;top:529px;width:1px;height:102px;background:#d3c6ee"></div>
<div class="a" style="left:228px;top:529px;width:1px;height:102px;background:#d3c6ee"></div>
<div class="a" style="left:478px;top:529px;width:1px;height:102px;background:#d3c6ee"></div>
<div class="a" style="left:583px;top:529px;width:1px;height:102px;background:#d3c6ee"></div>
<div class="a" style="left:673px;top:529px;width:1px;height:102px;background:#d3c6ee"></div>
<div class="a" style="left:763px;top:529px;width:1px;height:102px;background:#d3c6ee"></div>
<div class="a" style="left:883px;top:529px;width:1px;height:102px;background:#d3c6ee"></div>
<div class="a" style="left:1003px;top:529px;width:1px;height:102px;background:#d3c6ee"></div>
<div class="a" style="left:1123px;top:529px;width:1px;height:102px;background:#d3c6ee"></div>
<div class="a" style="left:1243px;top:529px;width:1px;height:102px;background:#d3c6ee"></div>
<div class="a" style="left:1383px;top:529px;width:1px;height:102px;background:#d3c6ee"></div>
<div class="a" style="left:1503px;top:529px;width:1px;height:102px;background:#d3c6ee"></div>
<div class="c" style="right:1659px;top:534px;color:#10931f">2.2</div>
<div class="c" style="right:1543px;top:534px;color:#10931f">1.1-1-295</div>
<div class="c" style="left:239px;top:534px;color:#10931f">Материал рулонный, кровельный,<br>гидроизоляционный, битумно-<br>полимерный, типа ЭПП 4,0, гибкость до<br>-15°С, разрывная сила в продольном/<br>поперечном направлении не менее<br>600/600 Н, для устройства нижнего слоя<br>гидроизоляции</div>
<div class="c" style="left:489px;top:534px;color:#10931f">м2</div>
<div class="c" style="right:1098px;top:534px;color:#10931f">226,00</div>
<div class="c" style="right:1003px;top:534px;color:#10931f">904,00</div>
<div class="c" style="right:883px;top:534px;color:#10931f">47,78</div>
<div class="c" style="right:643px;top:534px;color:#10931f">1</div>
<div class="c" style="right:523px;top:534px;color:#10931f">43 193,12</div>
<div class="c" style="right:383px;top:534px;color:#10931f">7,28</div>
<div class="c" style="right:263px;top:534px;color:#10931f">314 445,91</div>
<svg class="a" style="left:68px;top:613px" width="7" height="11" viewBox="0 0 7 11"><path d="M1.2 1l4.5 4.5-4.5 4.5" fill="none" stroke="#4b2aa8" stroke-width="1.5"/></svg>
<svg class="a" style="left:38px;top:533px" width="13" height="13" viewBox="0 0 13 13"><g fill="none" stroke="#0c9a1c" stroke-width="1.3" stroke-linecap="round"><path d="M5.6 11.4A5 5 0 0 1 3.2 3.2"/><path d="M7.4 1.6A5 5 0 0 1 9.8 9.8"/><path d="M4.4 6.4L5.6 8.4 8.4 5.4"/></g><path d="M1.2 1h4l-0.6 4z" fill="#0c9a1c"/><path d="M11.8 12h-4l0.6-4z" fill="#0c9a1c"/></svg>
<div class="a" style="left:33px;top:631px;width:1470px;height:24px;background:#ece8fb"></div>
<div class="a" style="left:33px;top:631px;width:1470px;height:1px;background:#d3c6ee"></div>
<div class="a" style="left:33px;top:631px;width:1px;height:24px;background:#d3c6ee"></div>
<div class="a" style="left:113px;top:631px;width:1px;height:24px;background:#d3c6ee"></div>
<div class="a" style="left:228px;top:631px;width:1px;height:24px;background:#d3c6ee"></div>
<div class="a" style="left:1003px;top:631px;width:1px;height:24px;background:#d3c6ee"></div>
<div class="a" style="left:1123px;top:631px;width:1px;height:24px;background:#d3c6ee"></div>
<div class="a" style="left:1243px;top:631px;width:1px;height:24px;background:#d3c6ee"></div>
<div class="a" style="left:1503px;top:631px;width:1px;height:24px;background:#d3c6ee"></div>
<div class="a" style="left:33px;top:655px;width:1470px;height:1px;background:#d3c6ee"></div>
<svg class="a" style="left:46px;top:638px" width="7" height="11" viewBox="0 0 7 11"><path d="M1.2 1l4.5 4.5-4.5 4.5" fill="none" stroke="#4b2aa8" stroke-width="1.5"/></svg>
<div class="c" style="left:239px;top:636px;color:#222">Всего</div>
<div class="c" style="right:523px;top:638px;color:#222;font-weight:bold">68 595,91</div>
<div class="c" style="right:263px;top:638px;color:#222;font-weight:bold">713 399,94</div>
<div class="a" style="left:30px;top:628px;width:46px;height:27px;border:3px solid #fe0a0a;border-radius:1px"></div>
</div><!--/TABLE-->

<!-- BOTTOM -->
<div class="ln" style="left:32px;top:1026px;width:1728px;height:1px"></div>
<div class="ln" style="left:1735px;top:194px;width:1px;height:832px"></div>
<div class="ln" style="left:33px;top:655px;width:1px;height:371px"></div>
</body></html>
